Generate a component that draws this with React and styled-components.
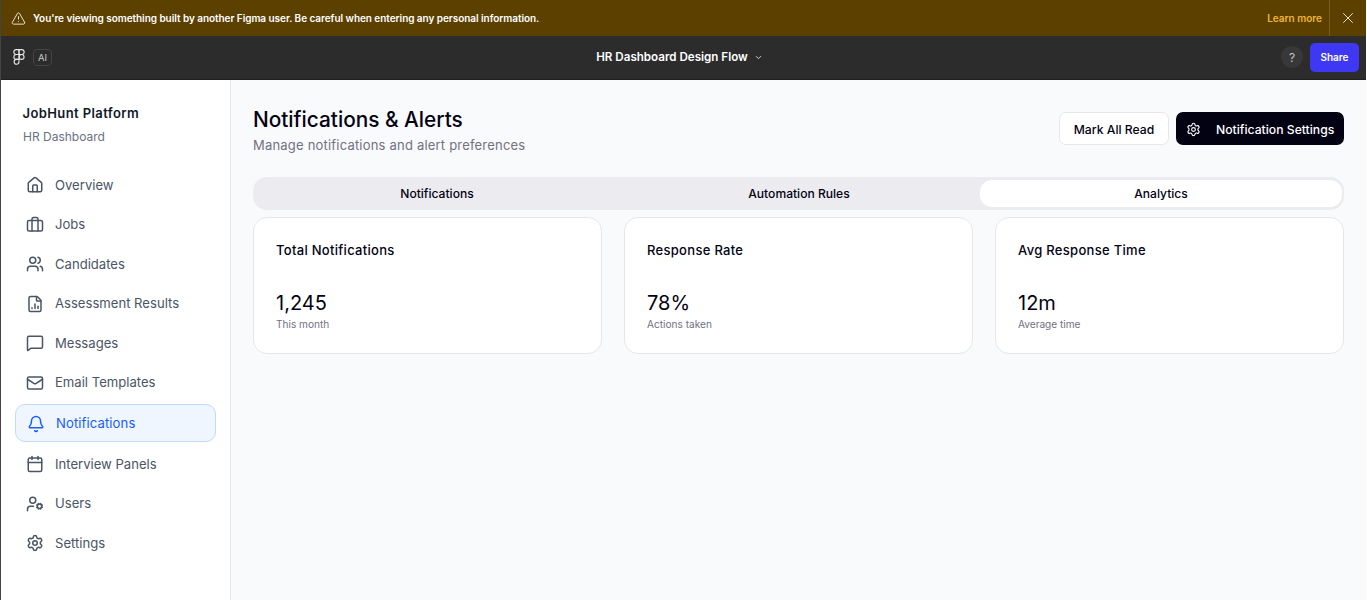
import React from 'react'
import styled, { createGlobalStyle } from 'styled-components'
import {
  House, Briefcase, Users, FileChartColumn, MessageSquare, Mail, Bell, Calendar,
  UserCog, Settings, TriangleAlert, X, ChevronDown,
} from 'lucide-react'

const GlobalStyle = createGlobalStyle`
  html, body { margin: 0; padding: 0; overflow: hidden; background: #fff; }
  * { box-sizing: border-box; }
  body { font-family: Inter, "Noto Sans", sans-serif; }
`

const navItems = [
  { label: 'Overview', icon: House },
  { label: 'Jobs', icon: Briefcase },
  { label: 'Candidates', icon: Users },
  { label: 'Assessment Results', icon: FileChartColumn },
  { label: 'Messages', icon: MessageSquare },
  { label: 'Email Templates', icon: Mail },
  { label: 'Notifications', icon: Bell, active: true },
  { label: 'Interview Panels', icon: Calendar },
  { label: 'Users', icon: UserCog },
  { label: 'Settings', icon: Settings },
]

const tabs = [
  { label: 'Notifications' },
  { label: 'Automation Rules' },
  { label: 'Analytics', active: true },
]

const stats = [
  { title: 'Total Notifications', value: '1,245', note: 'This month' },
  { title: 'Response Rate', value: '78%', note: 'Actions taken' },
  { title: 'Avg Response Time', value: '12m', note: 'Average time' },
]

function FigmaLogo() {
  return (
    <svg width="12" height="16" viewBox="0 0 12 16" fill="none" stroke="#e6e6e6" strokeWidth="1.1">
      <path d="M6 .6H3.3a2.45 2.45 0 0 0 0 4.9H6z" />
      <path d="M6 .6h2.7a2.45 2.45 0 0 1 0 4.9H6z" />
      <path d="M6 5.5H3.3a2.45 2.45 0 0 0 0 4.9H6z" />
      <circle cx="8.6" cy="7.95" r="2.45" />
      <path d="M6 10.4H3.3a2.45 2.45 0 1 0 2.7 2.45z" />
    </svg>
  )
}

export default function App() {
  return (
    <>
      <GlobalStyle />
      <Frame>
        <Banner>
          <BannerIcon><TriangleAlert size={15} strokeWidth={1.5} /></BannerIcon>
          <BannerText>You're viewing something built by another Figma user. Be careful when entering any personal information.</BannerText>
          <LearnMore>Learn more</LearnMore>
          <BannerClose><X size={18} strokeWidth={1.2} /></BannerClose>
        </Banner>
        <TopBar>
          <TopLeft>
            <FigmaLogo />
            <AiBadge>AI</AiBadge>
          </TopLeft>
          <FileName>
            HR Dashboard Design Flow
            <ChevronDown size={9} strokeWidth={2} />
          </FileName>
          <TopRight>
            <HelpButton>?</HelpButton>
            <ShareButton>Share</ShareButton>
          </TopRight>
        </TopBar>
        <Body>
          <Sidebar>
            <Brand>JobHunt Platform</Brand>
            <BrandSub>HR Dashboard</BrandSub>
            <Nav>
              {navItems.map((item) => (
                <NavItem key={item.label} $active={item.active}>
                  <item.icon size={18} strokeWidth={2} />
                  <span>{item.label}</span>
                </NavItem>
              ))}
            </Nav>
          </Sidebar>
          <Main>
            <PageHeader>
              <div>
                <PageTitle>Notifications &amp; Alerts</PageTitle>
                <PageSub>Manage notifications and alert preferences</PageSub>
              </div>
              <Actions>
                <OutlineButton>Mark All Read</OutlineButton>
                <DarkButton>
                  <Settings size={15} strokeWidth={1.75} />
                  Notification Settings
                </DarkButton>
              </Actions>
            </PageHeader>
            <TabList>
              {tabs.map((tab) => (
                <Tab key={tab.label} $active={tab.active}>{tab.label}</Tab>
              ))}
            </TabList>
            <CardGrid>
              {stats.map((stat) => (
                <Card key={stat.title}>
                  <CardTitle>{stat.title}</CardTitle>
                  <CardValue>{stat.value}</CardValue>
                  <CardNote>{stat.note}</CardNote>
                </Card>
              ))}
            </CardGrid>
          </Main>
        </Body>
      </Frame>
    </>
  )
}

const Frame = styled.div`
  width: 100%;
  height: 600px;
  display: flex;
  flex-direction: column;
  border-left: 1px solid #444;
  border-right: 1px solid #fff;
`

const Banner = styled.div`
  height: 36px;
  flex: none;
  display: flex;
  align-items: center;
  padding-left: 10px;
  background: #5c4000;
  color: #fff;
`

const BannerIcon = styled.span`
  display: flex;
  margin-right: 7px;
  color: #f0ece2;
`

const BannerText = styled.div`
  flex: 1;
  font-size: 10px;
  font-weight: 600;
  letter-spacing: -0.05px;
`

const LearnMore = styled.span`
  font-size: 10px;
  font-weight: 600;
  color: #eeb62f;
  margin-right: 7px;
`

const BannerClose = styled.span`
  width: 37px;
  height: 36px;
  display: flex;
  align-items: center;
  justify-content: center;
  border-left: 1px solid #7a5c1c;
  color: #eee;
`

const TopBar = styled.div`
  height: 44px;
  flex: none;
  display: grid;
  grid-template-columns: 1fr auto 1fr;
  align-items: center;
  padding: 0 7px 1px 12px;
  background: #2c2c2c;
  border-bottom: 1px solid #1f1f1f;
`

const TopLeft = styled.div`
  display: flex;
  align-items: center;
  gap: 8px;
`

const AiBadge = styled.span`
  width: 19px;
  height: 17px;
  display: flex;
  align-items: center;
  justify-content: center;
  font-size: 9.5px;
  color: #c8c8c8;
  border: 1px solid #444;
  border-radius: 4px;
`

const FileName = styled.div`
  display: flex;
  align-items: center;
  gap: 6px;
  padding-right: 13px;
  font-size: 11.6px;
  font-weight: 600;
  color: #fff;
`

const TopRight = styled.div`
  display: flex;
  align-items: center;
  justify-content: flex-end;
  gap: 7px;
`

const HelpButton = styled.span`
  width: 22px;
  height: 22px;
  display: flex;
  align-items: center;
  justify-content: center;
  border-radius: 50%;
  background: #383838;
  color: #c4c4c4;
  font-size: 12px;
`

const ShareButton = styled.span`
  width: 49px;
  height: 29px;
  display: flex;
  align-items: center;
  justify-content: center;
  border-radius: 5px;
  background: #3e38f5;
  color: #fff;
  font-size: 10px;
  font-weight: 600;
`

const Body = styled.div`
  flex: 1;
  display: flex;
  min-height: 0;
`

const Sidebar = styled.aside`
  width: 230px;
  flex: none;
  padding: 24px 14px 0 14px;
  background: #fff;
  border-right: 1px solid #e5e7eb;
`

const Brand = styled.div`
  margin-left: 7.5px;
  font-size: 13px;
  line-height: 18px;
  font-weight: 600;
  letter-spacing: 0.4px;
  color: #101828;
`

const BrandSub = styled.div`
  margin: 6px 0 0 8px;
  font-size: 12px;
  line-height: 18px;
  color: #6a7282;
`

const Nav = styled.nav`
  margin-top: 21px;
  display: flex;
  flex-direction: column;
  gap: 4px;
`

const NavItem = styled.div`
  height: ${(p) => (p.$active ? '38px' : '35.5px')};
  display: flex;
  align-items: center;
  gap: 11px;
  padding: 1px 11px 0;
  font-size: 13.1px;
  line-height: 19.5px;
  letter-spacing: ${(p) => (p.$active ? '0.1px' : '0')};
  color: ${(p) => (p.$active ? '#155dfc' : '#4a5565')};
  background: ${(p) => (p.$active ? '#eff6ff' : 'transparent')};
  border: ${(p) => (p.$active ? '1px solid #bedbff' : 'none')};
  border-radius: 10px;
  svg { flex: none; }
`

const Main = styled.main`
  flex: 1;
  min-width: 0;
  padding: 25px 22px 0;
  background: #f9fafb;
`

const PageHeader = styled.div`
  display: flex;
  justify-content: space-between;
  align-items: flex-start;
`

const PageTitle = styled.h1`
  margin: 1px 0 0;
  font-size: 20.8px;
  line-height: 28px;
  font-weight: 500;
  color: #030213;
`

const PageSub = styled.p`
  margin: 1px 0 0;
  font-size: 13px;
  line-height: 20px;
  letter-spacing: 0.2px;
  color: #717182;
`

const Actions = styled.div`
  display: flex;
  gap: 7px;
  margin-top: 7px;
`

const OutlineButton = styled.div`
  width: 110px;
  height: 33px;
  padding-top: 1px;
  display: flex;
  align-items: center;
  justify-content: center;
  background: #fff;
  border: 1px solid #e5e7eb;
  border-radius: 7px;
  font-size: 12.2px;
  font-weight: 500;
  color: #030213;
`

const DarkButton = styled.div`
  width: 168px;
  height: 33px;
  padding: 1px 0 0 10px;
  display: flex;
  align-items: center;
  gap: 15px;
  background: #030213;
  border-radius: 7px;
  font-size: 12.2px;
  font-weight: 500;
  color: #fff;
`

const TabList = styled.div`
  margin-top: 22px;
  height: 33px;
  display: grid;
  grid-template-columns: repeat(3, 1fr);
  padding: 3px 2px 3px 3px;
  background: #ececf0;
  border-radius: 14px;
`

const Tab = styled.div`
  display: flex;
  align-items: center;
  justify-content: center;
  font-size: 12.1px;
  font-weight: 500;
  color: #030213;
  background: ${(p) => (p.$active ? '#fff' : 'transparent')};
  border-radius: 12px;
`

const CardGrid = styled.div`
  margin-top: 7px;
  display: grid;
  grid-template-columns: repeat(3, 1fr);
  gap: 22px;
`

const Card = styled.div`
  height: 137px;
  padding: 22px;
  background: #fff;
  border: 1px solid #e5e7eb;
  border-radius: 14px;
`

const CardTitle = styled.div`
  font-size: 13px;
  line-height: 20px;
  font-weight: 500;
  letter-spacing: 0.3px;
  color: #030213;
`

const CardValue = styled.div`
  margin-top: 29px;
  font-size: 20px;
  line-height: 28px;
  color: #030213;
`

const CardNote = styled.div`
  font-size: 10.1px;
  line-height: 14px;
  color: #717182;
`
